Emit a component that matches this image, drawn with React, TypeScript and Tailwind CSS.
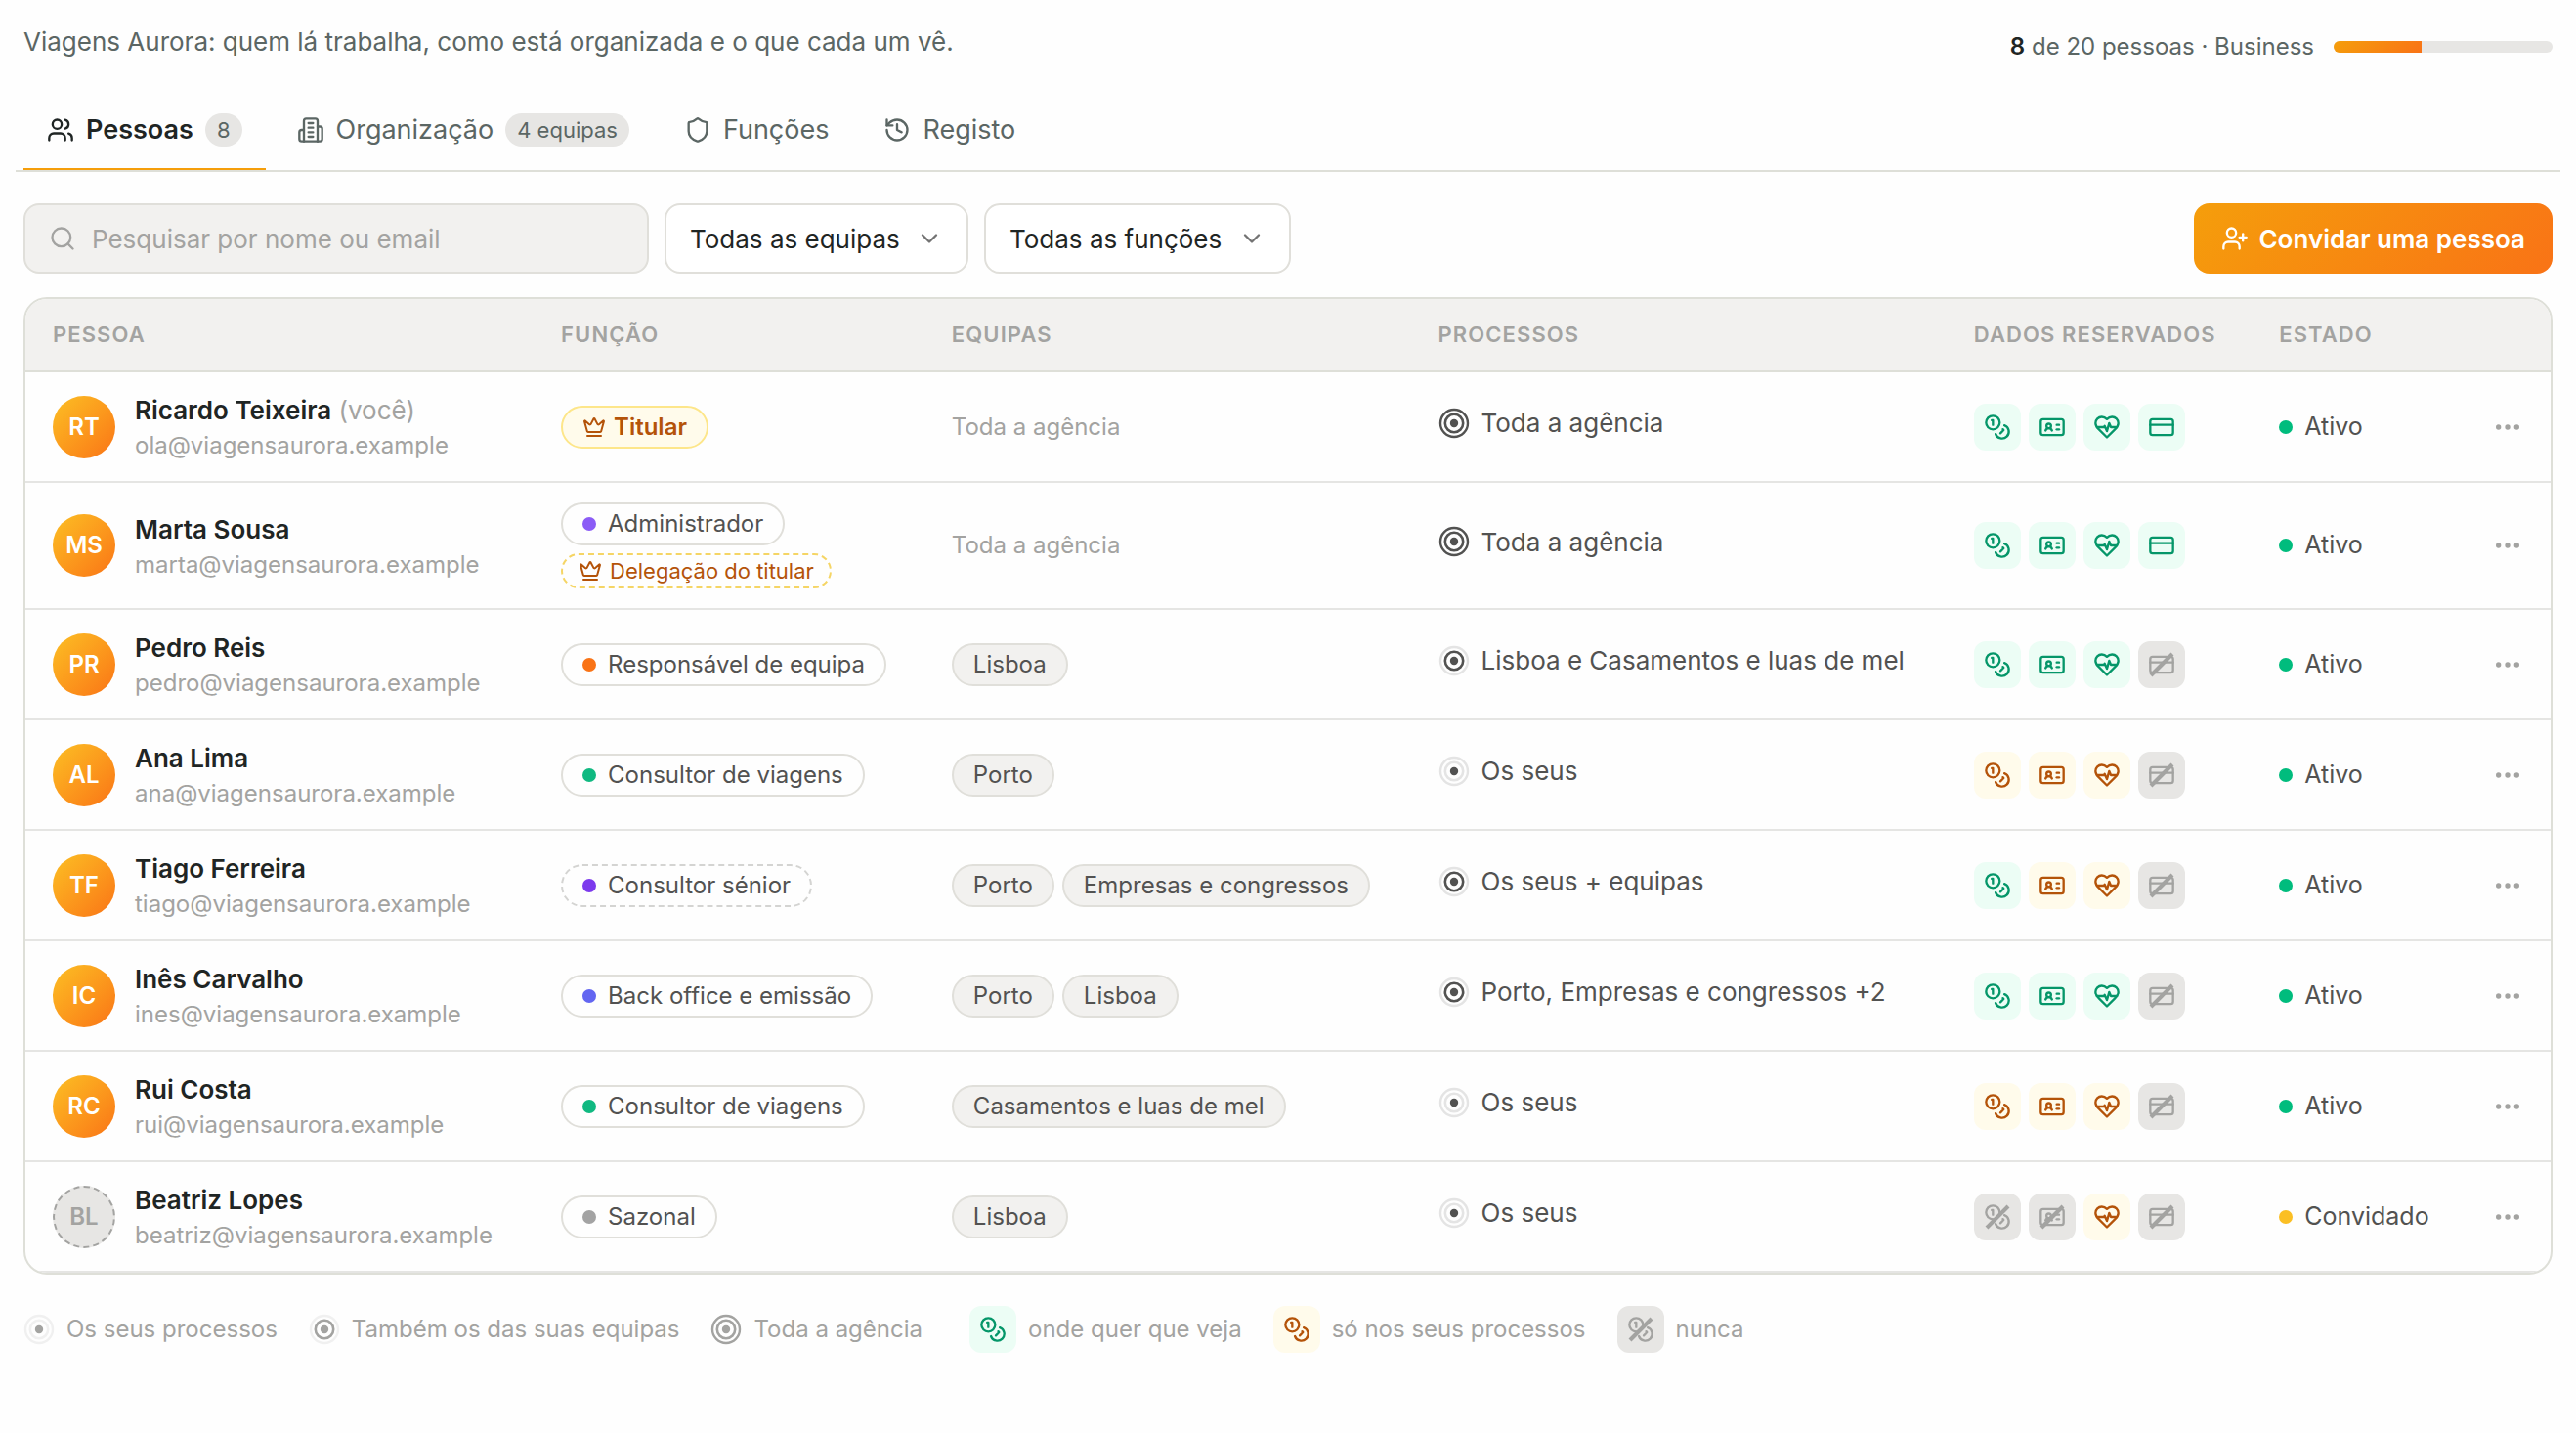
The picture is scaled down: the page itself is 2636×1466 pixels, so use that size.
import type { ReactNode } from 'react';
import { ChevronDown, CreditCard, History, IdCard, Search, Shield, UserPlus, Users } from 'lucide-react';
import clsx from 'clsx';

type Access = 'all' | 'own' | 'never';
type Scope = 'own' | 'teams' | 'agency';

interface Person {
  initials: string;
  name: string;
  email: string;
  you?: boolean;
  role: string;
  roleDot?: string;
  owner?: boolean;
  custom?: boolean;
  delegate?: boolean;
  teams: string[];
  scope: Scope;
  scopeLabel: string;
  access: Access[];
  invited?: boolean;
}

const PEOPLE: Person[] = [
  {
    initials: 'RT',
    name: 'Ricardo Teixeira',
    email: 'ola@viagensaurora.example',
    you: true,
    role: 'Titular',
    owner: true,
    teams: [],
    scope: 'agency',
    scopeLabel: 'Toda a agência',
    access: ['all', 'all', 'all', 'all'],
  },
  {
    initials: 'MS',
    name: 'Marta Sousa',
    email: 'marta@viagensaurora.example',
    role: 'Administrador',
    roleDot: 'bg-[#8b5cf6]',
    delegate: true,
    teams: [],
    scope: 'agency',
    scopeLabel: 'Toda a agência',
    access: ['all', 'all', 'all', 'all'],
  },
  {
    initials: 'PR',
    name: 'Pedro Reis',
    email: 'pedro@viagensaurora.example',
    role: 'Responsável de equipa',
    roleDot: 'bg-[#f97316]',
    teams: ['Lisboa'],
    scope: 'teams',
    scopeLabel: 'Lisboa e Casamentos e luas de mel',
    access: ['all', 'all', 'all', 'never'],
  },
  {
    initials: 'AL',
    name: 'Ana Lima',
    email: 'ana@viagensaurora.example',
    role: 'Consultor de viagens',
    roleDot: 'bg-[#10b981]',
    teams: ['Porto'],
    scope: 'own',
    scopeLabel: 'Os seus',
    access: ['own', 'own', 'own', 'never'],
  },
  {
    initials: 'TF',
    name: 'Tiago Ferreira',
    email: 'tiago@viagensaurora.example',
    role: 'Consultor sénior',
    roleDot: 'bg-[#7c3aed]',
    custom: true,
    teams: ['Porto', 'Empresas e congressos'],
    scope: 'teams',
    scopeLabel: 'Os seus + equipas',
    access: ['all', 'own', 'own', 'never'],
  },
  {
    initials: 'IC',
    name: 'Inês Carvalho',
    email: 'ines@viagensaurora.example',
    role: 'Back office e emissão',
    roleDot: 'bg-[#6366f1]',
    teams: ['Porto', 'Lisboa'],
    scope: 'teams',
    scopeLabel: 'Porto, Empresas e congressos +2',
    access: ['all', 'all', 'all', 'never'],
  },
  {
    initials: 'RC',
    name: 'Rui Costa',
    email: 'rui@viagensaurora.example',
    role: 'Consultor de viagens',
    roleDot: 'bg-[#10b981]',
    teams: ['Casamentos e luas de mel'],
    scope: 'own',
    scopeLabel: 'Os seus',
    access: ['own', 'own', 'own', 'never'],
  },
  {
    initials: 'BL',
    name: 'Beatriz Lopes',
    email: 'beatriz@viagensaurora.example',
    role: 'Sazonal',
    roleDot: 'bg-[#a3a3a3]',
    teams: ['Lisboa'],
    scope: 'own',
    scopeLabel: 'Os seus',
    access: ['never', 'never', 'own', 'never'],
    invited: true,
  },
];

const ACCESS_STYLES: Record<Access, string> = {
  all: 'bg-[#ecfdf5] text-[#059669]',
  own: 'bg-[#fffbeb] text-[#b45309]',
  never: 'bg-[#e7e6e4] text-[#a3a3a1]',
};

const Svg = ({ className, children }: { className?: string; children: ReactNode }) => (
  <svg
    viewBox="0 0 24 24"
    fill="none"
    stroke="currentColor"
    strokeWidth="2"
    strokeLinecap="round"
    strokeLinejoin="round"
    className={className}
    aria-hidden="true"
  >
    {children}
  </svg>
);

const BuildingIcon = ({ className }: { className?: string }) => (
  <Svg className={className}>
    <path d="M6 22V4a2 2 0 0 1 2-2h8a2 2 0 0 1 2 2v18Z" />
    <path d="M6 12H4a2 2 0 0 0-2 2v6a2 2 0 0 0 2 2h2" />
    <path d="M18 9h2a2 2 0 0 1 2 2v9a2 2 0 0 1-2 2h-2" />
    <path d="M10 6h4M10 10h4M10 14h4M10 18h4" />
  </Svg>
);

const CrownIcon = ({ className }: { className?: string }) => (
  <Svg className={className}>
    <path d="M11.562 3.266a.5.5 0 0 1 .876 0L15.39 8.87a1 1 0 0 0 1.516.294L21.183 5.5a.5.5 0 0 1 .798.519l-2.834 10.246a1 1 0 0 1-.956.734H5.81a1 1 0 0 1-.957-.734L2.02 6.02a.5.5 0 0 1 .798-.519l4.276 3.664a1 1 0 0 0 1.516-.294z" />
    <path d="M5 21h14" />
  </Svg>
);

const CoinsIcon = ({ className }: { className?: string }) => (
  <Svg className={className}>
    <circle cx="8" cy="8" r="6" />
    <path d="M18.09 10.37A6 6 0 1 1 10.34 18" />
    <path d="M7 6h1v4" />
    <path d="m16.71 13.88.7.71-2.82 2.82" />
  </Svg>
);

const HeartPulseIcon = ({ className }: { className?: string }) => (
  <Svg className={className}>
    <path d="M19 14c1.49-1.46 3-3.21 3-5.5A5.5 5.5 0 0 0 16.5 3c-1.76 0-3 .5-4.5 2-1.5-1.5-2.74-2-4.5-2A5.5 5.5 0 0 0 2 8.5c0 2.3 1.5 4.05 3 5.5l7 7Z" />
    <path d="M3.22 12H9.5l.5-1 2 4.5 2-7 1.5 3.5h5.27" />
  </Svg>
);

const DotsIcon = ({ className }: { className?: string }) => (
  <Svg className={className}>
    <circle cx="5" cy="12" r="1" />
    <circle cx="12" cy="12" r="1" />
    <circle cx="19" cy="12" r="1" />
  </Svg>
);

const DATA_ICONS = [CoinsIcon, IdCard, HeartPulseIcon, CreditCard];

/** Target with one, two or three active rings */
const ScopeIcon = ({ scope }: { scope: Scope }) => (
  <svg viewBox="0 0 32 32" className="size-8 shrink-0" fill="none" stroke="currentColor" aria-hidden="true">
    <circle cx="16" cy="16" r="14" strokeWidth="2.4" opacity={scope === 'agency' ? 1 : 0.15} />
    <circle cx="16" cy="16" r="9.2" strokeWidth="2.6" opacity={scope === 'own' ? 0.15 : 1} />
    <circle cx="16" cy="16" r="4.2" fill="currentColor" stroke="none" />
  </svg>
);

const AccessChip = ({ access, kind }: { access: Access; kind: number }) => {
  const Icon = DATA_ICONS[kind];
  return (
    <span className={clsx('relative flex size-12 items-center justify-center rounded-xl', ACCESS_STYLES[access])}>
      <Icon className="size-7" />
      {access === 'never' && (
        <svg viewBox="0 0 48 48" className="absolute inset-0" stroke="currentColor" strokeWidth="4" aria-hidden="true">
          <path d="M13 35 35 13" />
        </svg>
      )}
    </span>
  );
};

const RoleBadge = ({ person }: { person: Person }) => {
  if (person.owner) {
    return (
      <span className="flex h-11 items-center gap-2 rounded-full border-2 border-[#fde68a] bg-[#fffbeb] px-5 text-2xl font-semibold text-[#b45309]">
        <CrownIcon className="size-6" />
        {person.role}
      </span>
    );
  }
  return (
    <span
      className={clsx(
        'flex h-11 items-center gap-3 rounded-full border-2 px-5 text-2xl',
        person.custom ? 'border-dashed border-[#d4d4d2]' : 'border-[#e0dfda]',
      )}
    >
      <span className={clsx('size-3.5 rounded-full', person.roleDot)} />
      {person.role}
    </span>
  );
};

const PersonRow = ({ person }: { person: Person }) => (
  <tr className="border-b-2 border-[#e5e5e3]">
    <td className="px-7 py-[19px]">
      <div className="flex items-center gap-5">
        <span
          className={clsx(
            'flex size-16 shrink-0 items-center justify-center rounded-full text-2xl font-semibold',
            person.invited
              ? 'border-2 border-dashed border-[#a3a3a1] bg-[#e7e6e4] text-[#a3a3a1]'
              : 'bg-linear-to-br from-[#fbbf24] to-[#f97316] text-white',
          )}
        >
          {person.initials}
        </span>
        <div className="pt-0.5">
          <p className="text-[26px] leading-9 font-semibold text-[#1f2524]">
            {person.name}
            {person.you && <span className="font-normal text-[#a3a3a1]"> (você)</span>}
          </p>
          <p className="text-2xl leading-[35px] text-[#a3a3a1]">{person.email}</p>
        </div>
      </div>
    </td>
    <td className="px-7 py-5">
      <div className="flex flex-col items-start gap-2">
        <RoleBadge person={person} />
        {person.delegate && (
          <span className="flex h-9 items-center gap-2 rounded-full border-2 border-dashed border-[#f5d565] px-4 text-[22px] text-[#b45309]">
            <CrownIcon className="size-6" />
            Delegação do titular
          </span>
        )}
      </div>
    </td>
    <td className="px-7">
      {person.teams.length === 0 ? (
        <span className="text-2xl text-[#a3a3a1]">Toda a agência</span>
      ) : (
        <ul className="flex gap-2">
          {person.teams.map((team) => (
            <li
              key={team}
              className="flex h-11 items-center rounded-full border-2 border-[#e0dfda] bg-[#f2f1ef] px-5 text-2xl"
            >
              {team}
            </li>
          ))}
        </ul>
      )}
    </td>
    <td className="px-7">
      <div className="flex items-center gap-3 pb-2 text-[26px]">
        <ScopeIcon scope={person.scope} />
        {person.scopeLabel}
      </div>
    </td>
    <td className="px-7">
      <div className="flex gap-2">
        {person.access.map((access, idx) => (
          <AccessChip key={idx} access={access} kind={idx} />
        ))}
      </div>
    </td>
    <td className="px-7">
      <div className="flex items-center gap-3 text-[25px]">
        <span className={clsx('size-3.5 rounded-full', person.invited ? 'bg-[#fbbf24]' : 'bg-[#00bc7d]')} />
        {person.invited ? 'Convidado' : 'Ativo'}
      </div>
    </td>
    <td className="px-7">
      <button type="button" aria-label="Mais ações" className="ml-auto flex text-[#a3a3a1]">
        <DotsIcon className="size-8" />
      </button>
    </td>
  </tr>
);

const TABS = [
  { label: 'Pessoas', icon: Users, badge: '8' },
  { label: 'Organização', icon: BuildingIcon, badge: '4 equipas' },
  { label: 'Funções', icon: Shield },
  { label: 'Registo', icon: History },
];

const COLUMNS = ['Pessoa', 'Função', 'Equipas', 'Processos', 'Dados reservados', 'Estado', ''];

const SCOPES: { scope: Scope; label: string }[] = [
  { scope: 'own', label: 'Os seus processos' },
  { scope: 'teams', label: 'Também os das suas equipas' },
  { scope: 'agency', label: 'Toda a agência' },
];

const ACCESSES: { access: Access; label: string }[] = [
  { access: 'all', label: 'onde quer que veja' },
  { access: 'own', label: 'só nos seus processos' },
  { access: 'never', label: 'nunca' },
];

const Filter = ({ label }: { label: string }) => (
  <div className="relative flex items-center">
    <select
      aria-label={label}
      className="h-18 appearance-none rounded-2xl border-2 border-[#e0dfda] bg-white pr-17 pl-6 text-[26px] text-[#1f2524]"
    >
      <option>{label}</option>
    </select>
    <ChevronDown className="pointer-events-none absolute right-[26px] size-7 text-[#737373]" />
  </div>
);

const App = () => {
  return (
    <main className="min-h-screen bg-[#fefefe] px-6 pt-[22px] font-[Inter,sans-serif] text-[#525251]">
      <header className="flex items-center justify-between">
        <p className="text-[26px] leading-[42px] text-[#5b6664]">
          Viagens Aurora: quem lá trabalha, como está organizada e o que cada um vê.
        </p>
        <div className="flex items-center gap-5 pt-2.5 text-2xl text-[#5b6664]">
          <span>
            <b className="font-semibold text-[#1f2524]">8</b> de 20 pessoas · Business
          </span>
          <div className="h-3 w-56 overflow-hidden rounded-full bg-[#e7e6e4]">
            <div className="h-full w-2/5 bg-linear-[135deg] from-[#f59e0b] to-[#f97316]" />
          </div>
        </div>
      </header>

      {/* Separadores */}
      <nav className="-mx-2 mt-[30px] flex gap-2 border-b-2 border-[#dedfd8] px-2">
        {TABS.map(({ label, icon: Icon, badge }, idx) => (
          <button
            key={label}
            type="button"
            className={clsx(
              'flex h-20 items-center gap-3 border-b-2 px-6 text-[27px]',
              idx === 0 ? 'border-[#f59e0b] font-semibold text-[#1f2524]' : 'border-transparent text-[#5b6664]',
            )}
          >
            <Icon className="size-7" />
            {label}
            {badge && (
              <span className="rounded-full bg-[#e7e6e4] px-3 text-[22px] leading-[34px] font-normal text-[#5b6664]">
                {badge}
              </span>
            )}
          </button>
        ))}
      </nav>

      {/* Pesquisa e filtros */}
      <div className="mt-8 flex items-center gap-4">
        <label className="flex h-18 w-160 items-center gap-4 rounded-2xl border-2 border-[#e0dfda] bg-[#f2f1ef] px-6">
          <Search className="size-7 text-[#a3a3a1]" />
          <input
            type="search"
            aria-label="Pesquisar"
            placeholder="Pesquisar por nome ou email"
            className="min-w-0 flex-1 bg-transparent text-[26px] outline-none placeholder:text-[#a3a3a1]"
          />
        </label>
        <Filter label="Todas as equipas" />
        <Filter label="Todas as funções" />
        <button
          type="button"
          className="ml-auto flex h-18 items-center gap-2.5 rounded-2xl bg-linear-[135deg] from-[#f59e0b] to-[#f97316] px-7 text-[26px] font-semibold text-white"
        >
          <UserPlus className="size-7" />
          Convidar uma pessoa
        </button>
      </div>

      {/* Tabela de pessoas */}
      <div className="mt-6 overflow-hidden rounded-3xl border-2 border-[#dedfd8]">
        <table className="w-full border-collapse text-left whitespace-nowrap">
          <thead>
            <tr className="border-b-2 border-[#dedfd8] bg-[#f2f1ef]">
              {COLUMNS.map((column) => (
                <th
                  key={column}
                  className="h-[74px] px-7 text-[22px] font-semibold tracking-wider text-[#a3a3a1] uppercase"
                >
                  {column}
                </th>
              ))}
            </tr>
          </thead>
          <tbody>
            {PEOPLE.map((person) => (
              <PersonRow key={person.email} person={person} />
            ))}
          </tbody>
        </table>
      </div>

      {/* Legenda */}
      <footer className="flex items-center gap-12 py-8 text-2xl text-[#a3a3a1]">
        <div className="flex gap-8">
          {SCOPES.map(({ scope, label }) => (
            <span key={scope} className="flex items-center gap-3">
              <ScopeIcon scope={scope} />
              {label}
            </span>
          ))}
        </div>
        <div className="flex gap-8">
          {ACCESSES.map(({ access, label }) => (
            <span key={access} className="flex items-center gap-3">
              <AccessChip access={access} kind={0} />
              {label}
            </span>
          ))}
        </div>
      </footer>
    </main>
  );
};

export default App;
